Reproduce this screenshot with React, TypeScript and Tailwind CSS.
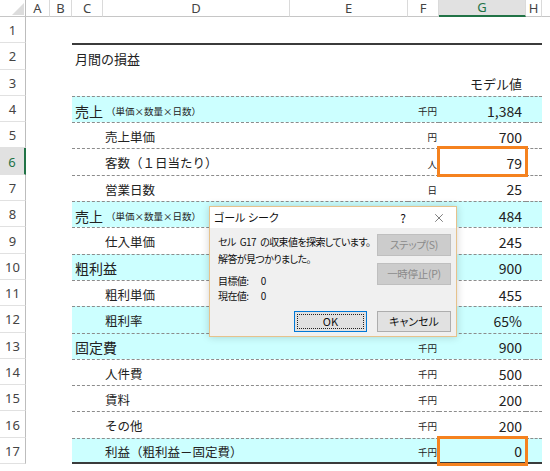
import { X } from 'lucide-react';

type SheetRow = {
  label?: string;
  sub?: string;
  level?: 1 | 2;
  unit?: string;
  value?: string;
  fill?: boolean;
  box?: boolean;
};

const JP = "font-['Noto_Sans_CJK_JP','Noto_Sans',sans-serif]";
const COLS = ['A', 'B', 'C', 'D', 'E', 'F', 'G', 'H'];

const ROWS: Record<number, SheetRow> = {
  4: { label: '売上', sub: '（単価×数量×日数）', level: 1, unit: '千円', value: '1,384', fill: true },
  5: { label: '売上単価', level: 2, unit: '円', value: '700' },
  6: { label: '客数（１日当たり）', level: 2, unit: '人', value: '79', box: true },
  7: { label: '営業日数', level: 2, unit: '日', value: '25' },
  8: { label: '売上', sub: '（単価×数量×日数）', level: 1, unit: '千円', value: '484', fill: true },
  9: { label: '仕入単価', level: 2, unit: '円', value: '245' },
  10: { label: '粗利益', level: 1, unit: '千円', value: '900', fill: true },
  11: { label: '粗利単価', level: 2, unit: '円', value: '455' },
  12: { label: '粗利率', level: 2, value: '65%', fill: true },
  13: { label: '固定費', level: 1, unit: '千円', value: '900', fill: true },
  14: { label: '人件費', level: 2, unit: '千円', value: '500' },
  15: { label: '賃料', level: 2, unit: '千円', value: '200' },
  16: { label: 'その他', level: 2, unit: '千円', value: '200' },
  17: { label: '利益（粗利益－固定費）', level: 2, unit: '千円', value: '0', fill: true, box: true },
};

export default function App() {
  return (
    <div className={`relative w-[550px] h-[471px] overflow-hidden bg-white ${JP}`}>
      <div className="grid grid-cols-[26px_24px_22px_31px_187px_118px_31px_87px_16px_1fr] grid-rows-[17px_repeat(17,26.3px)]">
        <HeaderRow />
        {Array.from({ length: 17 }, (_, i) => (
          <BodyRow key={i + 1} n={i + 1} />
        ))}
      </div>
      <GoalSeekDialog />
    </div>
  );
}

function HeaderRow() {
  return (
    <>
      <div className="relative border-r border-b border-[#bdbdbd] border-b-[#c6c6c6]">
        <svg className="absolute right-[1px] bottom-[1px]" width="12" height="12" viewBox="0 0 12 12">
          <polygon points="12,0 12,12 0,12" fill="#dcdcdc" />
        </svg>
      </div>
      {COLS.map(c => (
        <div
          key={c}
          className={`flex items-center justify-center border-r border-[#dadada] font-['Noto_Sans',sans-serif] text-[13px] leading-none ${
            c === 'G'
              ? 'bg-[#e1e1e1] border-b-2 border-b-[#217346] text-[#217346]'
              : 'border-b border-b-[#c6c6c6] text-[#444]'
          }`}
        >
          {c}
        </div>
      ))}
      <div className="border-b border-[#c6c6c6]" />
    </>
  );
}

function BodyRow({ n }: { n: number }) {
  const row = ROWS[n];
  const selected = n === 6;

  const header = (
    <div
      className={`flex items-center justify-center pt-[2px] font-['Noto_Sans',sans-serif] text-[13px] leading-none border-b border-b-[#e1e1e1] ${
        selected ? 'bg-[#e1e1e1] text-[#217346] border-r-2 border-r-[#217346]' : 'text-[#444] border-r border-r-[#bdbdbd]'
      }`}
    >
      {n}
    </div>
  );

  // row 1: blank, row 2: title with heavy rule, row 3: column caption
  if (n === 1) {
    return (
      <>
        {header}
        <div className="col-span-9" />
      </>
    );
  }

  if (n === 2) {
    return (
      <>
        {header}
        <div className="col-span-2" />
        <div className="col-span-3 flex items-center pt-[3px] pl-[3px] border-t-2 border-[#3b3b3b] text-[13px] text-[#222]">月間の損益</div>
        <div className="col-span-3 border-t-2 border-[#3b3b3b]" />
        <div />
      </>
    );
  }

  if (n === 3) {
    return (
      <>
        {header}
        <div className="col-span-6" />
        <div className="flex items-center justify-end pt-[3px] pr-[4px] text-[13px] text-[#222]">モデル値</div>
        <div className="col-span-2" />
      </>
    );
  }

  const cell = `border-t border-dashed border-t-[#8c8c8c] ${row.fill ? 'bg-[#ccffff]' : ''} ${
    n === 17 ? 'border-b-2 border-b-[#3b3b3b] [border-bottom-style:solid]' : ''
  }`;

  return (
    <>
      {header}
      <div className="col-span-2" />
      <div className={`col-span-3 flex items-center pt-[3px] text-[#222] whitespace-nowrap ${cell} ${row.level === 1 ? 'pl-[3px]' : 'pl-[33px]'}`}>
        <span className={row.level === 1 ? 'text-[14px]' : 'text-[12.5px]'}>{row.label}</span>
        {row.sub && <span className="text-[9.5px] ml-[3px]">{row.sub}</span>}
      </div>
      <div className={`flex items-center justify-end pt-[3px] pr-[2px] text-[9.5px] text-[#222] ${cell}`}>{row.unit}</div>
      <div
        className={`flex items-center justify-end pt-[3px] pr-[4px] text-[14px] text-[#222] ${cell} ${
          row.box ? 'relative z-10 outline-[3px] outline-solid outline-[#f5821f] -outline-offset-1' : ''
        }`}
      >
        {row.value}
      </div>
      <div className={cell} />
      <div />
    </>
  );
}

function GoalSeekDialog() {
  return (
    <div className="absolute left-[209px] top-[206px] w-[248px] h-[131px] flex flex-col border border-[#e6c28c] bg-[#f0f0f0] shadow-[0_0_8px_rgba(0,0,0,0.18)] text-[10px] text-[#111] whitespace-nowrap [font-feature-settings:'palt']">
      <div className="h-[21px] flex items-center bg-white pl-[4px] pr-[10px]">
        <span className="flex-1 text-[11px]">ゴール シーク</span>
        <span className="w-[14px] text-center text-[12px] mr-[22px]">?</span>
        <X size={14} strokeWidth={1} className="text-[#222]" />
      </div>

      <div className="flex flex-1 pl-[8px] pr-[5px] pt-[5px]">
        <div className="flex-1 min-w-0 flex flex-col tracking-[-0.6px] [word-spacing:2.5px]">
          <div className="leading-[17px]">セル G17 の収束値を探索しています。</div>
          <div className="leading-[17px]">解答が見つかりました。</div>
          <div className="leading-[15px] mt-[6px]">目標値:&nbsp;&nbsp; 0</div>
          <div className="leading-[15px]">現在値:&nbsp;&nbsp; 0</div>
        </div>
        <div className="shrink-0 flex flex-col gap-[7px] pt-[1px]">
          <DisabledButton>ステップ(S)</DisabledButton>
          <DisabledButton>一時停止(P)</DisabledButton>
        </div>
      </div>

      <div className="flex justify-end gap-[10px] pr-[5px] pb-[4px]">
        <div className="w-[73px] h-[21px] p-[2px] bg-[#e1e1e1] border border-[#0078d7]">
          <div className="h-full flex items-center justify-center border border-dotted border-[#222] text-[11px]">OK</div>
        </div>
        <div className="w-[74px] h-[21px] flex items-center justify-center bg-[#e1e1e1] border border-[#adadad] text-[11px]">キャンセル</div>
      </div>
    </div>
  );
}

function DisabledButton({ children }: { children: React.ReactNode }) {
  return (
    <div className="w-[74px] h-[22px] flex items-center justify-center bg-[#cccccc] border border-[#bfbfbf] text-[10.5px] tracking-[-0.3px] text-[#8a8a8a]">
      {children}
    </div>
  );
}
